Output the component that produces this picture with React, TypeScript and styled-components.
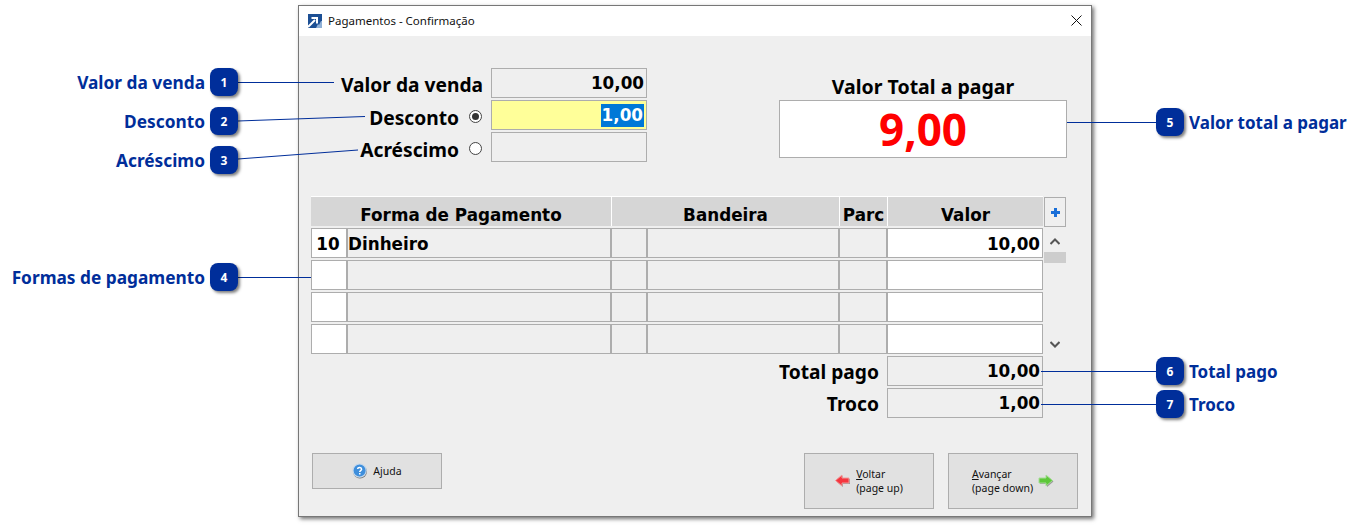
import React from "react";
import styled, { createGlobalStyle } from "styled-components";

const TAHOMA = `"Noto Sans", "Open Sans", sans-serif`;
const VERDANA = `"DejaVu Sans", Verdana, sans-serif`;
const BLUE = "#002e9a";
const EDGE = "#adadad";

const Global = createGlobalStyle`
  html, body { margin: 0; padding: 0; background: #fff; overflow: hidden; }
  * { box-sizing: border-box; }
`;

const Page = styled.div`
  position: relative;
  width: 1362px;
  height: 526px;
  padding: 5px 0 0 298px;
  background: #fff;
  font-family: ${TAHOMA};
`;

const Window = styled.div`
  width: 794px;
  height: 512px;
  display: flex;
  flex-direction: column;
  border: 1px solid #777;
  background: #efefef;
  box-shadow: 2px 2px 4px rgba(0, 0, 0, 0.55);
`;

const TitleBar = styled.div`
  height: 30px;
  flex: none;
  display: flex;
  align-items: center;
  padding: 0 9px 1px;
  background: #fff;
`;

const TitleText = styled.span`
  margin: 0 0 1px 6px;
  font-size: 11.5px;
  color: #111;
  flex: 1;
`;

const Body = styled.div`
  flex: 1;
  display: flex;
  flex-direction: column;
  padding: 32px 0 0 12px;
`;

const TopRow = styled.div`
  display: flex;
  height: 94px;
`;

const EntryColumn = styled.div`
  width: 336px;
  display: flex;
  flex-direction: column;
  gap: 2px;
`;

const EntryRow = styled.div`
  height: 30px;
  display: flex;
  align-items: center;
  justify-content: flex-end;
`;

const BigLabel = styled.span<{ $drop?: number }>`
  margin-top: ${(p) => p.$drop ?? 0}px;
  font-size: 19.2px;
  font-weight: 700;
  color: #000;
  white-space: nowrap;
  line-height: 30px;
`;

const Radio = styled.span<{ $on?: boolean }>`
  width: 13px;
  height: 13px;
  margin: 3px 1px 0 10px;
  border-radius: 50%;
  border: 1px solid #444;
  background: #fff;
  flex: none;
  display: flex;
  align-items: center;
  justify-content: center;
  &::after {
    content: "";
    width: 7px;
    height: 7px;
    border-radius: 50%;
    background: ${(p) => (p.$on ? "#333" : "transparent")};
  }
`;

const Field = styled.div<{ $bg?: string }>`
  width: 156px;
  height: 30px;
  margin-left: 8px;
  flex: none;
  border: 1px solid ${EDGE};
  background: ${(p) => p.$bg ?? "transparent"};
  display: flex;
  align-items: center;
  justify-content: flex-end;
  padding-right: 2px;
  font-family: ${VERDANA};
  font-weight: 700;
  font-size: 16.8px;
  color: #000;
`;

const Selected = styled.span`
  background: #0078d7;
  color: #fff;
  height: 23px;
  line-height: 23px;
  padding: 0 1px;
`;

const TotalBlock = styled.div`
  width: 288px;
  margin-left: 132px;
  display: flex;
  flex-direction: column;
`;

const TotalTitle = styled.div`
  height: 32px;
  line-height: 38px;
  text-align: center;
  font-size: 19.5px;
  font-weight: 700;
  color: #000;
`;

const TotalBox = styled.div`
  height: 58px;
  border: 1px solid ${EDGE};
  background: #fff;
  display: flex;
  align-items: center;
  justify-content: center;
  font-size: 44px;
  font-weight: 700;
  color: #ff0000;
`;

const TableArea = styled.div`
  display: flex;
  margin-top: 34px;
`;

const TableMain = styled.div`
  width: 732px;
  display: flex;
  flex-direction: column;
`;

const HeaderRow = styled.div`
  height: 32px;
  display: grid;
  grid-template-columns: 301px 228px 48px 155px;
  padding-bottom: 2px;
`;

const HeaderCell = styled.div<{ $last?: boolean }>`
  background: #d6d6d6;
  border-top: 1px solid #fff;
  border-right: ${(p) => (p.$last ? "none" : "1px solid #fff")};
  text-align: center;
  font-family: ${VERDANA};
  font-weight: 700;
  font-size: 16.8px;
  line-height: 36px;
  color: #000;
  overflow: hidden;
`;

const DataRow = styled.div`
  height: 32px;
  display: grid;
  grid-template-columns: 36px 264px 36px 192px 48px 156px;
  padding-bottom: 2px;
`;

const Cell = styled.div<{ $white?: boolean; $align?: string }>`
  border: 1px solid ${EDGE};
  background: ${(p) => (p.$white ? "#fff" : "transparent")};
  text-align: ${(p) => p.$align ?? "left"};
  font-family: ${VERDANA};
  font-weight: 700;
  font-size: 16.8px;
  line-height: 30px;
  padding: 0 2px 0 0;
  color: #000;
  white-space: nowrap;
  overflow: hidden;
`;

const SideBar = styled.div`
  width: 22px;
  margin-left: 1px;
  display: flex;
  flex-direction: column;
  height: 158px;
  align-items: stretch;
`;

const PlusButton = styled.div`
  height: 30px;
  margin-top: 1px;
  border: 1px solid ${EDGE};
  background: #efefef;
  display: flex;
  align-items: center;
  justify-content: center;
`;

const Chevron = styled.div<{ $h: number; $top?: number }>`
  height: ${(p) => p.$h}px;
  padding-top: ${(p) => p.$top ?? 0}px;
  display: flex;
  align-items: center;
  justify-content: center;
`;

const Thumb = styled.div`
  height: 11px;
  background: #cdcdcd;
`;

const Spacer = styled.div`
  flex: 1;
`;

const SummaryRow = styled.div`
  width: 732px;
  height: 32px;
  display: flex;
  align-items: flex-start;
  justify-content: flex-end;
`;

const SummaryStack = styled.div`
  display: flex;
  flex-direction: column;
`;

const Footer = styled.div`
  width: 767px;
  display: flex;
  align-items: flex-start;
  justify-content: space-between;
  padding-left: 1px;
  margin-top: 33px;
`;

const ButtonGroup = styled.div`
  display: flex;
  gap: 14px;
`;

const ActionButton = styled.div<{ $h: number }>`
  width: 130px;
  height: ${(p) => p.$h}px;
  border: 1px solid ${EDGE};
  background: #e1e1e1;
  display: flex;
  align-items: center;
  justify-content: center;
  gap: 5px;
  font-size: 10.5px;
  line-height: 14px;
  color: #111;
`;

const ButtonLines = styled.div`
  display: flex;
  flex-direction: column;
`;

const Key = styled.span`
  text-decoration: underline;
`;

const CalloutLabel = styled.div<{ $y: number; $side: "left" | "right" }>`
  position: absolute;
  top: ${(p) => p.$y}px;
  ${(p) => (p.$side === "left" ? "right: 1157px;" : "left: 1189px;")}
  height: 28px;
  line-height: 30px;
  font-size: ${(p) => (p.$side === "left" ? 17.3 : 17)}px;
  font-weight: 700;
  color: ${BLUE};
  white-space: nowrap;
`;

const Badge = styled.div<{ $y: number; $side: "left" | "right" }>`
  position: absolute;
  top: ${(p) => p.$y}px;
  left: ${(p) => (p.$side === "left" ? 210 : 1156)}px;
  width: 28px;
  height: 28px;
  border-radius: 8px;
  background: ${BLUE};
  color: #fff;
  font-size: 12px;
  font-weight: 700;
  display: flex;
  align-items: center;
  justify-content: center;
  box-shadow: 2px 2px 3px rgba(0, 0, 0, 0.5);
`;

const Leaders = styled.svg`
  position: absolute;
  inset: 0;
  pointer-events: none;
`;

const callouts = [
  { n: 1, y: 68, side: "left", text: "Valor da venda" },
  { n: 2, y: 107, side: "left", text: "Desconto" },
  { n: 3, y: 146, side: "left", text: "Acréscimo" },
  { n: 4, y: 263, side: "left", text: "Formas de pagamento" },
  { n: 5, y: 108, side: "right", text: "Valor total a pagar" },
  { n: 6, y: 357, side: "right", text: "Total pago" },
  { n: 7, y: 390, side: "right", text: "Troco" },
] as const;

const leaders = [
  [238, 82.5, 334, 82.5],
  [238, 121, 365, 116.5],
  [238, 159, 358, 150],
  [238, 277.5, 311, 277.5],
  [1067, 122.5, 1156, 122.5],
  [1041, 371.5, 1156, 371.5],
  [1041, 404.5, 1156, 404.5],
];

const AppIcon = () => (
  <svg width="14" height="14" viewBox="0 0 14 14">
    <rect width="14" height="14" fill="#1c4f94" />
    <path d="M0 13 L7 6 M3.5 4 H9 V9.5" stroke="#fff" strokeWidth="2" fill="none" />
    <path d="M8 14 L10 10 L11 11 L13 7 H14 V14 Z" fill="#8fb0d6" />
  </svg>
);

const CloseIcon = () => (
  <svg width="11" height="11" viewBox="0 0 11 11">
    <path d="M0.5 0.5 L10.5 10.5 M10.5 0.5 L0.5 10.5" stroke="#111" strokeWidth="1" fill="none" />
  </svg>
);

const PlusIcon = () => (
  <svg width="9" height="9" viewBox="0 0 9 9">
    <path d="M3 0 H6 V3 H9 V6 H6 V9 H3 V6 H0 V3 H3 Z" fill="#1a6fd8" />
  </svg>
);

const ChevronIcon = ({ up }: { up?: boolean }) => (
  <svg width="10" height="7" viewBox="0 0 10 7">
    <path d={up ? "M0.5 6 L5 1.5 L9.5 6" : "M0.5 1 L5 5.5 L9.5 1"} stroke="#555" strokeWidth="2" fill="none" />
  </svg>
);

const HelpIcon = () => (
  <svg width="16" height="16" viewBox="0 0 16 16">
    <circle cx="8" cy="8.6" r="7" fill="#777" />
    <circle cx="7.6" cy="7.6" r="6.6" fill="#3f8fdc" stroke="#c4d8ec" strokeWidth="1.2" />
    <path d="M5.6 6 C5.8 4 9.6 4.1 9.6 6.2 C9.5 7.6 7.7 7.5 7.7 9" stroke="#fff" strokeWidth="1.5" fill="none" />
    <rect x="7" y="10" width="1.5" height="1.5" fill="#fff" />
  </svg>
);

const ArrowIcon = ({ dir }: { dir: "left" | "right" }) => (
  <svg width="16" height="14" viewBox="0 0 16 14">
    {dir === "left" ? (
      <>
        <path d="M1.5 7.5 L8 2 V5 H15 V10 H8 V13 Z" fill="#999" />
        <path d="M0.5 6.5 L7 1 V4 H14 V9 H7 V12 Z" fill="#f5363f" stroke="#f09a9a" strokeWidth="1" />
      </>
    ) : (
      <>
        <path d="M15.5 7.5 L9 2 V5 H2 V10 H9 V13 Z" fill="#999" />
        <path d="M14.5 6.5 L8 1 V4 H1 V9 H8 V12 Z" fill="#5ec83a" stroke="#a5dc95" strokeWidth="1" />
      </>
    )}
  </svg>
);

const rows = [
  { code: "10", name: "Dinheiro", value: "10,00" },
  { code: "", name: "", value: "" },
  { code: "", name: "", value: "" },
  { code: "", name: "", value: "" },
];

export default function App() {
  return (
    <>
      <Global />
      <Page>
        <Window>
          <TitleBar>
            <AppIcon />
            <TitleText>Pagamentos - Confirmação</TitleText>
            <CloseIcon />
          </TitleBar>
          <Body>
            <TopRow>
              <EntryColumn>
                <EntryRow>
                  <BigLabel $drop={3}>Valor da venda</BigLabel>
                  <Field>10,00</Field>
                </EntryRow>
                <EntryRow>
                  <BigLabel $drop={5}>Desconto</BigLabel>
                  <Radio $on />
                  <Field $bg="#ffff99">
                    <Selected>1,00</Selected>
                  </Field>
                </EntryRow>
                <EntryRow>
                  <BigLabel $drop={5}>Acréscimo</BigLabel>
                  <Radio />
                  <Field />
                </EntryRow>
              </EntryColumn>
              <TotalBlock>
                <TotalTitle>Valor Total a pagar</TotalTitle>
                <TotalBox>9,00</TotalBox>
              </TotalBlock>
            </TopRow>
            <TableArea>
              <TableMain>
                <HeaderRow>
                  <HeaderCell>Forma de Pagamento</HeaderCell>
                  <HeaderCell>Bandeira</HeaderCell>
                  <HeaderCell>Parc</HeaderCell>
                  <HeaderCell $last>Valor</HeaderCell>
                </HeaderRow>
                {rows.map((r, i) => (
                  <DataRow key={i}>
                    <Cell $white $align="center">{r.code}</Cell>
                    <Cell>{r.name}</Cell>
                    <Cell />
                    <Cell />
                    <Cell />
                    <Cell $white $align="right">{r.value}</Cell>
                  </DataRow>
                ))}
              </TableMain>
              <SideBar>
                <PlusButton>
                  <PlusIcon />
                </PlusButton>
                <Chevron $h={25} $top={3}>
                  <ChevronIcon up />
                </Chevron>
                <Thumb />
                <Spacer />
                <Chevron $h={20}>
                  <ChevronIcon />
                </Chevron>
              </SideBar>
            </TableArea>
            <SummaryStack>
              <SummaryRow>
                <BigLabel $drop={1}>Total pago</BigLabel>
                <Field>10,00</Field>
              </SummaryRow>
              <SummaryRow>
                <BigLabel $drop={1}>Troco</BigLabel>
                <Field>1,00</Field>
              </SummaryRow>
            </SummaryStack>
            <Footer>
              <ActionButton $h={36}>
                <HelpIcon />
                <span>
                  A<Key>j</Key>uda
                </span>
              </ActionButton>
              <ButtonGroup>
                <ActionButton $h={56}>
                  <ArrowIcon dir="left" />
                  <ButtonLines>
                    <span>
                      <Key>V</Key>oltar
                    </span>
                    <span>(page up)</span>
                  </ButtonLines>
                </ActionButton>
                <ActionButton $h={56}>
                  <ButtonLines>
                    <span>
                      <Key>A</Key>vançar
                    </span>
                    <span>(page down)</span>
                  </ButtonLines>
                  <ArrowIcon dir="right" />
                </ActionButton>
              </ButtonGroup>
            </Footer>
          </Body>
        </Window>
        <Leaders width="1362" height="526" viewBox="0 0 1362 526">
          {leaders.map(([a, b, c, d], i) => (
            <line key={i} x1={a} y1={b} x2={c} y2={d} stroke={BLUE} strokeWidth="1" />
          ))}
        </Leaders>
        {callouts.map((c) => (
          <React.Fragment key={c.n}>
            <CalloutLabel $y={c.y} $side={c.side}>{c.text}</CalloutLabel>
            <Badge $y={c.y} $side={c.side}>{c.n}</Badge>
          </React.Fragment>
        ))}
      </Page>
    </>
  );
}
